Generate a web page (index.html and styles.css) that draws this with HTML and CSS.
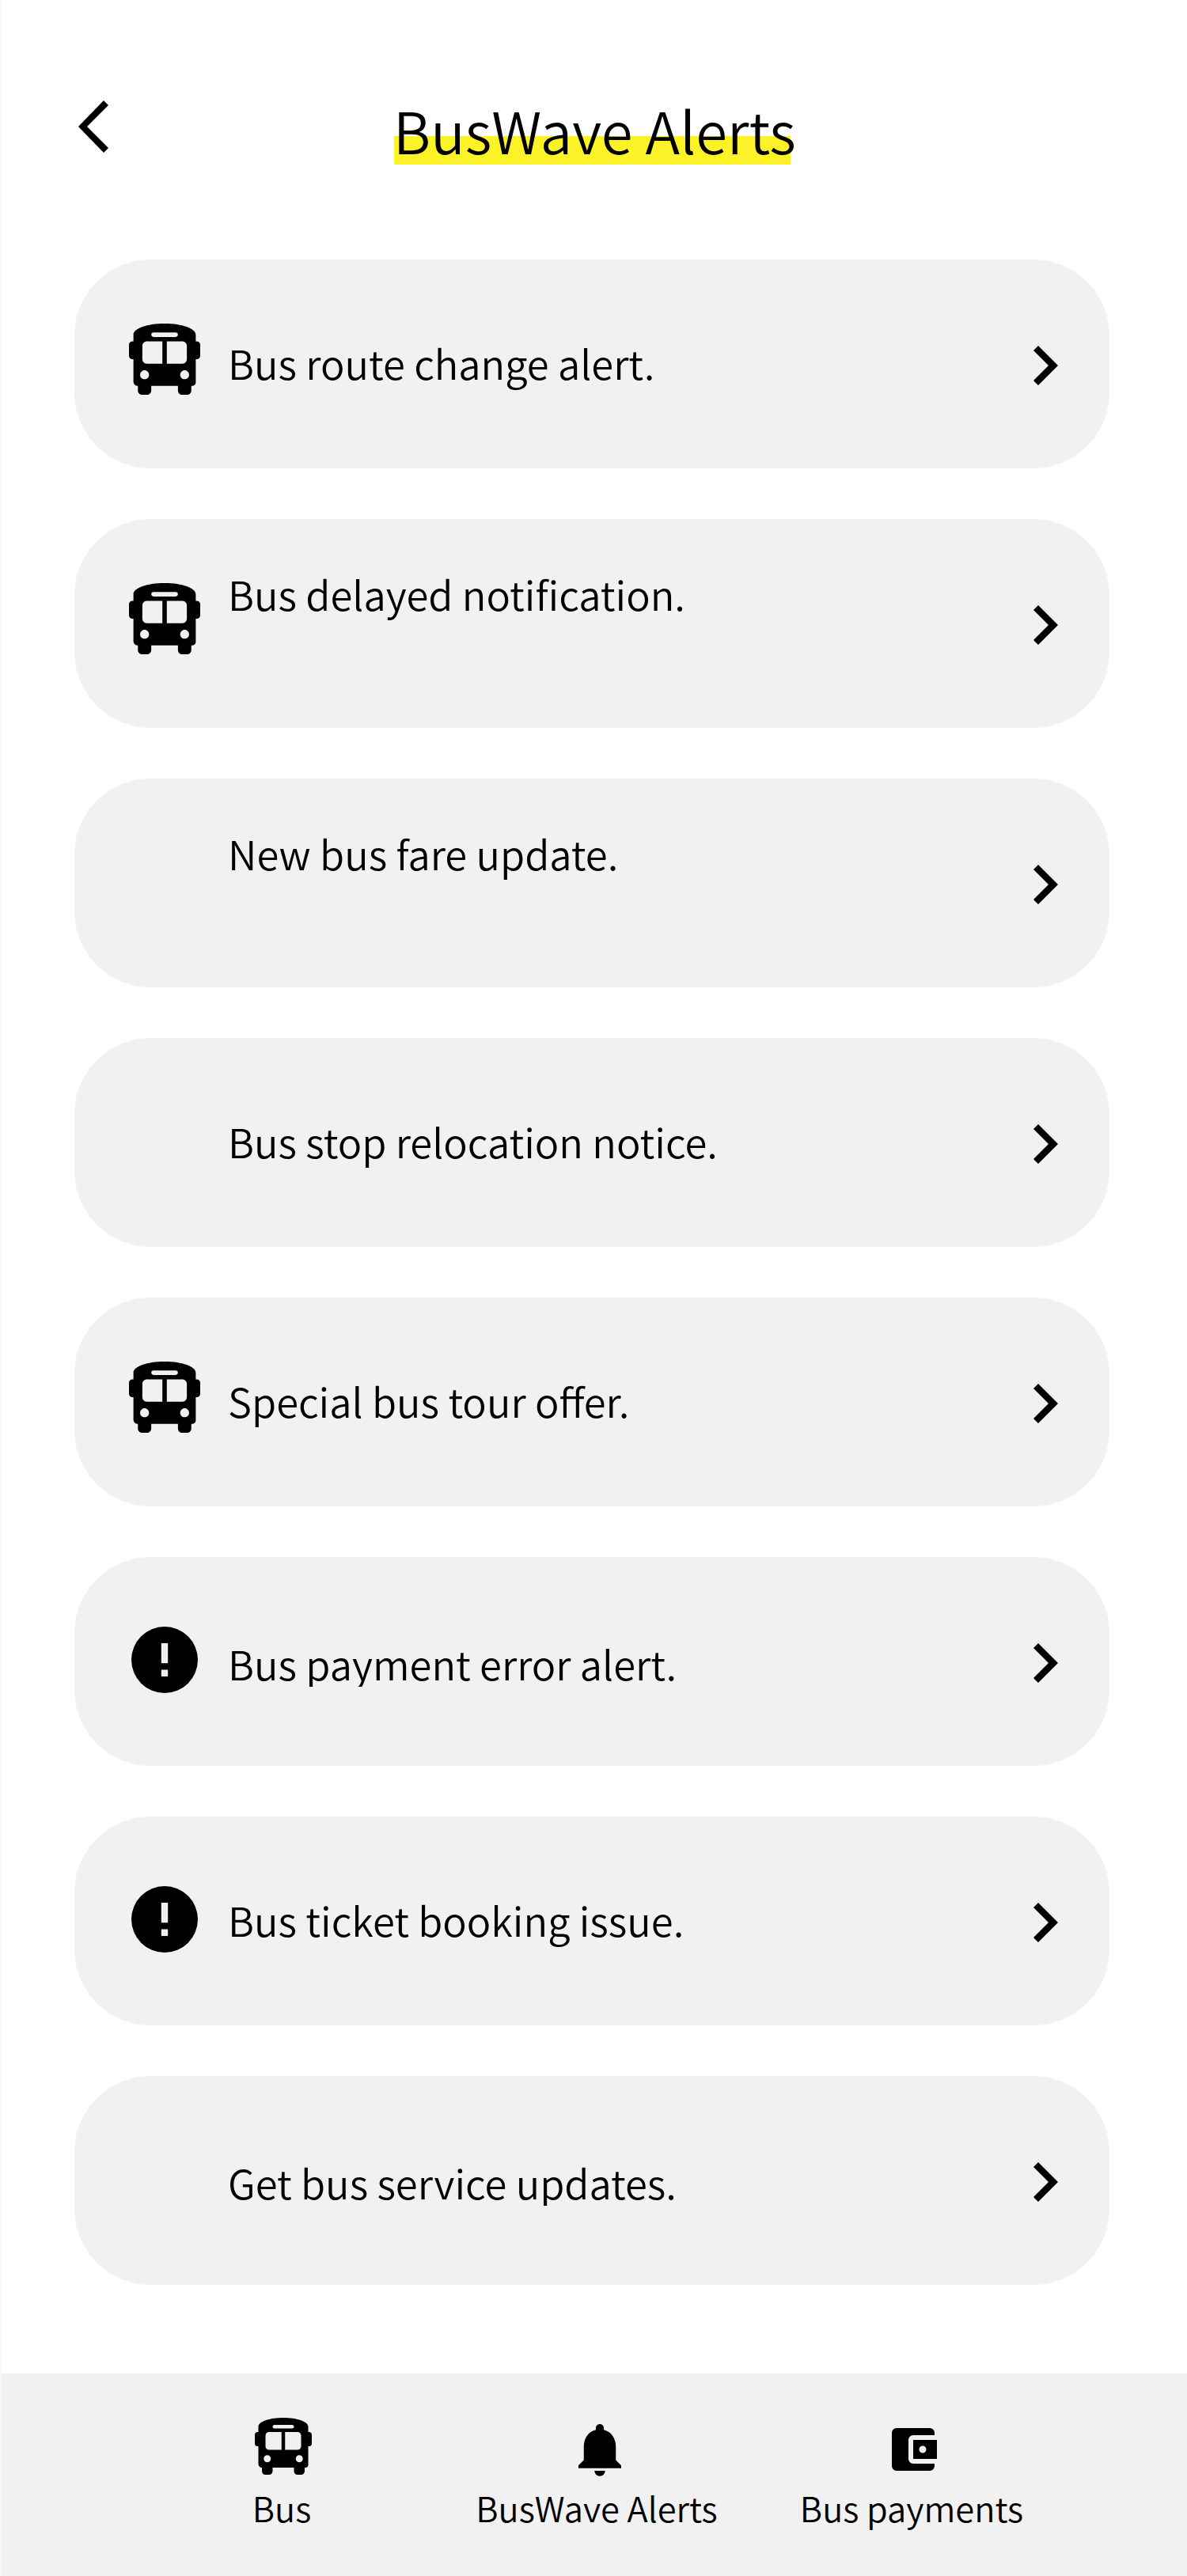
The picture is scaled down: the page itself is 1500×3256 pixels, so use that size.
FILE: index.html
```html
<!DOCTYPE html>
<html lang="en">
<head>
<meta charset="utf-8">
<title>BusWave Alerts</title>
<link rel="stylesheet" href="styles.css">
</head>
<body>
<svg class="sprite" aria-hidden="true">
  <symbol id="bus" viewBox="0 0 512 512">
    <path fill-rule="evenodd" d="M488 128h-8V80c0-44.800-99.200-80-224-80S32 35.200 32 80v48h-8c-13.250 0-24 10.740-24 24v80c0 13.250 10.750 24 24 24h8v160c0 17.670 14.330 32 32 32v32c0 17.670 14.330 32 32 32h32c17.670 0 32-14.330 32-32v-32h192v32c0 17.670 14.330 32 32 32h32c17.670 0 32-14.330 32-32v-32h6.400c16 0 25.600-12.800 25.600-25.600V256h8c13.250 0 24-10.740 24-24v-80c0-13.260-10.750-24-24-24zM160 80c0-8.840 7.160-16 16-16h160c8.840 0 16 7.160 16 16s-7.160 16-16 16H176c-8.840 0-16-7.160-16-16zm-48 320c-17.670 0-32-14.330-32-32s14.330-32 32-32 32 14.330 32 32-14.330 32-32 32zm128-112H128c-17.670 0-32-14.330-32-32v-96c0-17.670 14.330-32 32-32h112v160zm32 0V128h112c17.670 0 32 14.330 32 32v96c0 17.670-14.330 32-32 32H272zm128 112c-17.670 0-32-14.330-32-32s14.330-32 32-32 32 14.330 32 32-14.330 32-32 32z"/>
  </symbol>
  <symbol id="error" viewBox="2 2 20 20">
    <path d="M12 2a10 10 0 1 0 0 20 10 10 0 0 0 0-20zm1 15h-2v-2h2zm0-4h-2V7h2z"/>
  </symbol>
  <symbol id="next" viewBox="0 0 31 50">
    <path d="M6 0 0 6l19 19L0 44l6 6 25-25z"/>
  </symbol>
</svg>
<div class="screen">
  <header class="header">
    <svg class="back" viewBox="0 0 38 66"><path d="M32 0 38 6 11 33 38 60 32 66 0 33z"/></svg>
    <h1 class="title">BusWave Alerts</h1>
  </header>
  <main class="list">
    <a class="card"><svg class="icon"><use href="#bus"/></svg><span class="label">Bus route change alert.</span><svg class="next"><use href="#next"/></svg></a>
    <a class="card"><svg class="icon"><use href="#bus"/></svg><span class="label label-high">Bus delayed notification.</span><svg class="next"><use href="#next"/></svg></a>
    <a class="card"><span class="icon"></span><span class="label label-high">New bus fare update.</span><svg class="next"><use href="#next"/></svg></a>
    <a class="card"><span class="icon"></span><span class="label">Bus stop relocation notice.</span><svg class="next"><use href="#next"/></svg></a>
    <a class="card"><svg class="icon"><use href="#bus"/></svg><span class="label">Special bus tour offer.</span><svg class="next"><use href="#next"/></svg></a>
    <a class="card"><svg class="icon icon-error"><use href="#error"/></svg><span class="label label-low">Bus payment error alert.</span><svg class="next"><use href="#next"/></svg></a>
    <a class="card"><svg class="icon icon-error"><use href="#error"/></svg><span class="label">Bus ticket booking issue.</span><svg class="next"><use href="#next"/></svg></a>
    <a class="card"><span class="icon"></span><span class="label label-low">Get bus service updates.</span><svg class="next"><use href="#next"/></svg></a>
  </main>
  <nav class="nav">
    <a class="tab"><svg class="bus"><use href="#bus"/></svg><span>Bus</span></a>
    <a class="tab"><svg class="bell" viewBox="4 2 16 20"><path d="M12 22c1.100 0 2-.9 2-2h-4c0 1.100.9 2 2 2zm6-6v-5c0-3.070-1.630-5.640-4.500-6.320V4c0-.83-.67-1.500-1.500-1.500s-1.500.67-1.500 1.500v.68C7.640 5.360 6 7.920 6 11v5l-2 2v1h16v-1z"/></svg><span>BusWave Alerts</span></a>
    <a class="tab"><svg class="wallet" viewBox="0 0 57 54"><path fill-rule="evenodd" d="M6 0h42a6 6 0 0 1 6 6v3H27a6 6 0 0 0-6 6v24a6 6 0 0 0 6 6h27v3a6 6 0 0 1-6 6H6a6 6 0 0 1-6-6V6a6 6 0 0 1 6-6zM27 15h30v24H27zM39 22.500a4.500 4.500 0 1 0 0 9 4.500 4.500 0 0 0 0-9z"/></svg><span>Bus payments</span></a>
  </nav>
</div>
</body>
</html>
```
FILE: styles.css
```css
* { box-sizing: border-box; }
body { margin: 0; background: #fff; color: #000; font-family: "Noto Sans CJK SC", "Noto Sans", sans-serif; }
.sprite { display: none; }
.screen { width: 1500px; height: 3256px; display: flex; flex-direction: column; border-left: 2px solid #f8f8f8; }
.header { height: 328px; display: flex; align-items: flex-start; padding-left: 97px; }
.back { width: 38px; height: 66px; margin-top: 127px; }
.title { margin: 114px 0 0 361px; height: 94px; width: 501px; font-size: 72.3px; font-weight: 350; line-height: 100px; text-indent: -1px; white-space: nowrap; background: linear-gradient(#fcf228, #fcf228) 0 100% / 100% 36px no-repeat; }
.list { display: flex; flex-direction: column; gap: 64px; padding: 0 98px 0 92px; height: 2672px; }
.card { display: flex; height: 264px; flex: none; border-radius: 96px; background: #f1f1f1; align-items: flex-start; padding: 0 65px 0 69px; }
.icon { width: 90px; height: 90px; margin-top: 81px; }
.icon-error { width: 84px; height: 84px; margin: 88px 3px 0; }
.label { margin: 90px 0 0 35px; height: 80px; font-size: 50.7px; font-weight: 350; line-height: 80px; white-space: nowrap; }
.label-high { margin-top: 54px; }
.label-low { margin-top: 94px; height: 70px; overflow: hidden; }
.next { width: 31px; height: 50px; margin: 109px 0 0 auto; }
.nav { flex: 1; display: flex; padding-left: 155px; background: #f1f1f1; font-size: 43.4px; font-weight: 350; line-height: 64px; white-space: nowrap; }
.tab { display: flex; flex-direction: column; align-items: center; width: 398px; height: 201px; }
.tab span { margin-top: auto; }
.bus { width: 72px; height: 72px; margin: 56px 0 0 3px; }
.bell { width: 54px; height: 68px; margin: 62px 0 0 8px; }
.wallet { width: 57px; height: 54px; margin: 69px 0 0 7px; }
```
